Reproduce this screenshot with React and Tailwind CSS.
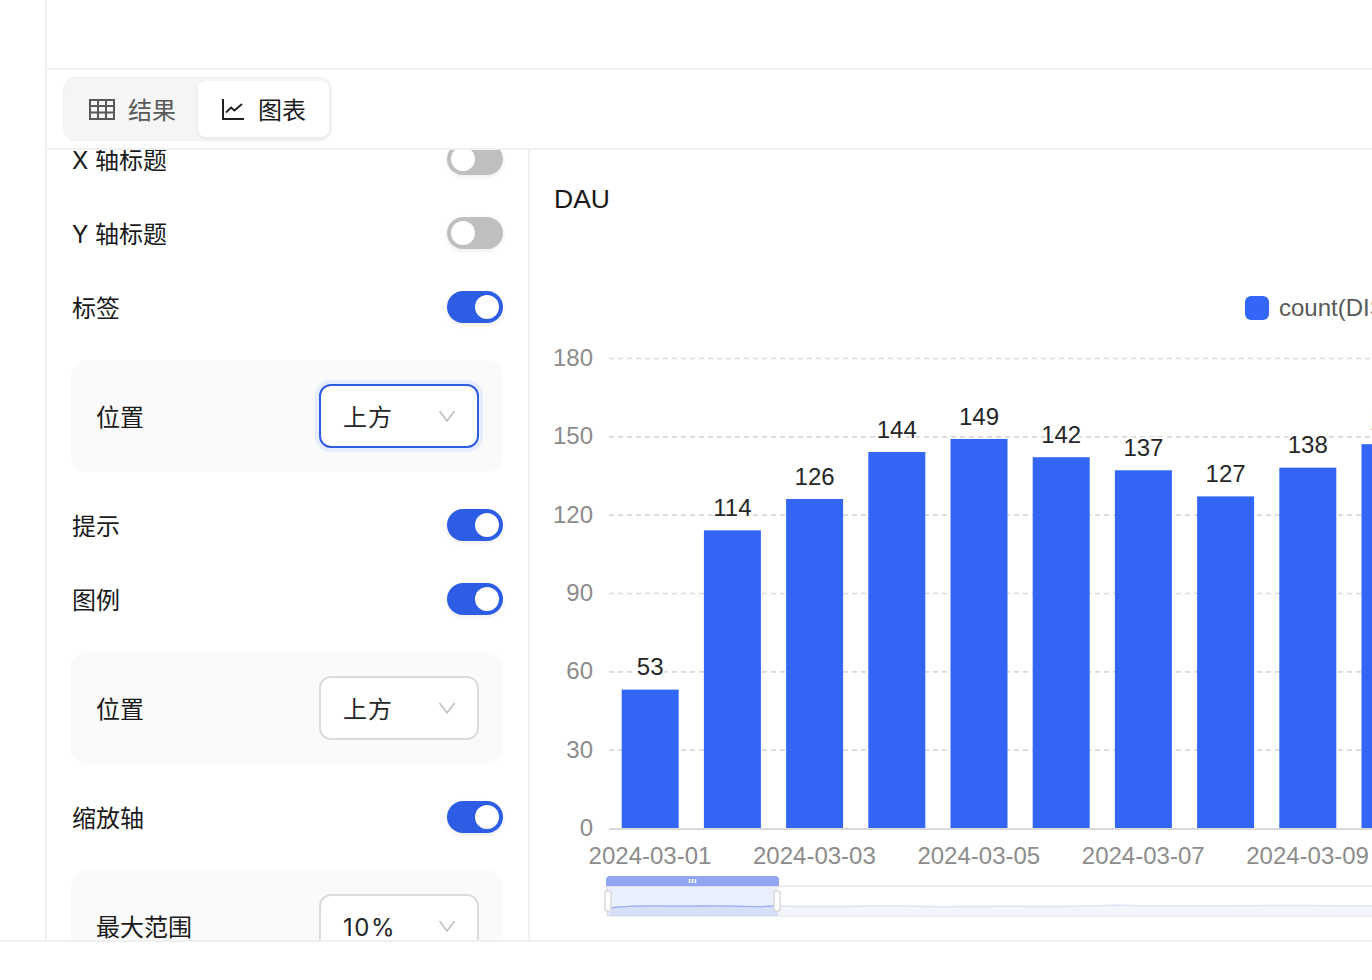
import React from "react";

const font = "font-['Liberation_Sans','Noto_Sans_CJK_SC',sans-serif]";
const panelFont = "font-['Inter','Noto_Sans_CJK_SC',sans-serif]";

function Toggle({ on }) {
  return (
    <div className={`flex h-8 w-14 items-center rounded-full px-1 shadow-[0_2px_4px_rgba(0,0,0,0.08)] ${on ? "justify-end bg-[#2d5de5]" : "justify-start bg-[#bfbfbf]"}`}>
      <div className="h-6 w-6 rounded-full bg-white" />
    </div>
  );
}

function Row({ label, on }) {
  return (
    <div className="flex h-[74px] items-center justify-between">
      <span className={`pl-px pt-1 text-2xl text-[#1a1a1a] ${panelFont}`}>{label}</span>
      <Toggle on={on} />
    </div>
  );
}

function Chevron() {
  return (
    <svg width="18" height="14" viewBox="0 0 18 14" fill="none" stroke="#bfbfbf" strokeWidth="1.6">
      <path d="M1.5 2 L9 12 L16.5 2" />
    </svg>
  );
}

function SelectBox({ label, value, focused, wide }) {
  return (
    <div className="my-4 flex h-28 items-center justify-between rounded-2xl bg-[#fafafa] pl-6 pr-6">
      <span className={`pl-px pt-1 text-2xl text-[#1a1a1a] ${panelFont}`}>{label}</span>
      <div className={`flex h-16 w-40 items-center justify-between rounded-xl border-2 bg-white pl-[22px] pr-[21px] ${focused ? "border-[#2d5de5] shadow-[0_0_0_4px_#e6ecfb]" : "border-[#dcdcdc]"}`}>
        <span className={`pt-1 text-2xl text-[#262626] ${panelFont} ${wide ? "tracking-[1.5px]" : "tracking-[1px]"}`}>{value}</span>
        <Chevron />
      </div>
    </div>
  );
}

const values = [53, 114, 126, 144, 149, 142, 137, 127, 138, 147];
const grid = [0, 30, 60, 90, 120, 150, 180];
const dates = ["2024-03-01", "2024-03-03", "2024-03-05", "2024-03-07", "2024-03-09"];
const y0 = 828.5;
const k = 470 / 180;
const ff = "'Liberation Sans','Noto Sans CJK SC',sans-serif";
const wave = "M609 908 C640 904 670 907 700 906 C725 905 745 908 778 906 C840 908 880 904 940 907 C1000 905 1060 908 1120 905 C1180 908 1260 904 1372 906";
const waveSel = "M609 908 C640 904 670 907 700 906 C725 905 745 908 778 906";

function Chart() {
  return (
    <svg className="block h-[692px] w-[842px]" viewBox="530 248 842 692" fontFamily={ff} fontSize="24">
      <rect x="1245" y="296" width="24" height="24" rx="6" fill="#3366f6" />
      <text x="1279" y="316" fill="#595959">count(DISTINCT user_id)</text>
      {grid.map((g) => (
        <g key={g}>
          {g > 0 && <line x1="609" x2="1372" y1={y0 - g * k} y2={y0 - g * k} stroke="#d9d9d9" strokeWidth="1.6" strokeDasharray="5 4" />}
          <text x="593" y={y0 - g * k + 7.4} textAnchor="end" fill="#8c8c8c">{g}</text>
        </g>
      ))}
      <line x1="609" x2="1372" y1="829" y2="829" stroke="#d9d9d9" strokeWidth="2" />
      {values.map((v, i) => {
        const x = 621.7 + i * 82.2;
        return (
          <g key={i}>
            <rect x={x} y={828 - v * k} width="57" height={v * k} fill="#3366f6" />
            <text x={x + 28.5} y={828 - v * k - 14.4} textAnchor="middle" fill="#262626" stroke="#ffffff" strokeWidth="4" paintOrder="stroke">{v}</text>
          </g>
        );
      })}
      {dates.map((d, i) => (
        <text key={d} x={650 + i * 164.4} y="864" textAnchor="middle" fill="#8c8c8c">{d}</text>
      ))}
      <rect x="607" y="886" width="800" height="30" fill="#ffffff" stroke="#eeeeee" strokeWidth="2" />
      <path d={`${wave} L1372 915 L609 915 Z`} fill="#f4f6fb" stroke="none" />
      <path d={wave} fill="none" stroke="#dfe5f5" strokeWidth="1.5" />
      <rect x="607" y="886" width="171" height="30" fill="#3366f6" fillOpacity="0.1" />
      <path d={`${waveSel} L778 916 L609 916 Z`} fill="#3366f6" fillOpacity="0.05" />
      <path d={waveSel} fill="none" stroke="#9db3f0" strokeWidth="1.3" />
      <path d="M606 886 L606 880 Q606 876 610 876 L775 876 Q779 876 779 880 L779 886 Z" fill="#91a5f0" />
      <path d="M689.5 879 V883 M692.5 879 V883 M695.5 879 V883" stroke="#ffffff" strokeWidth="1.6" />
      <rect x="605" y="891" width="6" height="20" rx="2" fill="#ffffff" stroke="#d9d9d9" strokeWidth="1.5" />
      <rect x="774" y="891" width="6" height="20" rx="2" fill="#ffffff" stroke="#d9d9d9" strokeWidth="1.5" />
    </svg>
  );
}

export default function App() {
  return (
    <div className={`h-[980px] w-[1372px] overflow-hidden bg-white ${font}`}>
      <div className="flex h-[942px] border-b-2 border-[#f0f0f0]">
        <div className="w-[47px] shrink-0 border-r-2 border-[#f0f0f0]" />
        <div className="flex min-w-0 flex-1 flex-col">
          <div className="h-[70px] shrink-0 border-b-2 border-[#f0f0f0]" />
          <div className="flex h-20 shrink-0 items-center border-b-2 border-[#f0f0f0] pl-4">
            <div className="flex h-16 w-[269px] items-center rounded-xl border border-[#f2f2f2] bg-[#f5f5f5] pl-[25px]">
              <svg width="26" height="21" viewBox="0 0 26 21" fill="none" stroke="#595959" strokeWidth="2">
                <rect x="1" y="1" width="24" height="19" />
                <path d="M1 7 H25 M1 13.5 H25 M9 1 V20 M17 1 V20" />
              </svg>
              <span className="ml-[13px] pt-1 text-2xl text-[#595959]">结果</span>
              <div className="ml-[22px] flex h-14 w-[131px] items-center rounded-lg bg-white pl-6 shadow-[0_2px_4px_rgba(0,0,0,0.06)]">
                <svg width="22" height="21" viewBox="0 0 22 21" fill="none" stroke="#1f1f1f" strokeWidth="2">
                  <path d="M1 0 V20 H22" />
                  <path d="M4 13.5 L9 8.5 L12.5 11.5 L20 5" strokeWidth="1.8" />
                </svg>
                <span className="ml-[14px] pt-1 text-2xl text-[#1a1a1a]">图表</span>
              </div>
            </div>
          </div>
          <div className="flex min-h-0 flex-1">
            <div className="w-[483px] shrink-0 overflow-hidden border-r-2 border-[#f0f0f0]">
              <div className="-mt-7 pl-6 pr-[25px]">
                <Row label="X 轴标题" on={false} />
                <Row label="Y 轴标题" on={false} />
                <Row label="标签" on />
                <SelectBox label="位置" value="上方" focused />
                <Row label="提示" on />
                <Row label="图例" on />
                <SelectBox label="位置" value="上方" />
                <Row label="缩放轴" on />
                <SelectBox label="最大范围" value="10%" wide />
              </div>
            </div>
            <div className="min-w-0 flex-1 overflow-hidden">
              <div className="flex h-[98px] items-start pl-6 pt-[32px]">
                <span className="text-[26.5px] leading-[34px] text-[#1a1a1a]">DAU</span>
              </div>
              <Chart />
            </div>
          </div>
        </div>
      </div>
    </div>
  );
}
